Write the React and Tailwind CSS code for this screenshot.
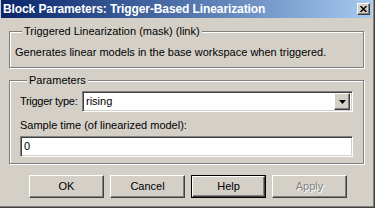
const raised =
  'border border-t-white border-l-white border-r-[#404040] border-b-[#404040] shadow-[inset_-1px_-1px_0_#808080,inset_1px_1px_0_#d4d0c8]';
const sunken =
  'border border-t-[#808080] border-l-[#808080] border-r-white border-b-white shadow-[inset_1px_1px_0_#404040,inset_-1px_-1px_0_#d4d0c8]';

function Group({ title, className, children }) {
  return (
    <fieldset
      className={`mx-[8px] border border-[#808080] shadow-[1px_1px_0_#fff,inset_1px_1px_0_#fff] ${className}`}
    >
      <legend className="ml-[7px] px-[2px] bg-[#d4d0c8] leading-[13px]">{title}</legend>
      {children}
    </fieldset>
  );
}

function Button({ label, isDefault, disabled }) {
  const inner = (
    <div
      className={`flex items-center justify-center ${raised} ${isDefault ? 'w-[73px] h-[21px]' : 'w-[75px] h-[23px]'}`}
    >
      <span className={disabled ? 'text-[#808080] [text-shadow:1px_1px_0_#fff]' : 'text-black'}>{label}</span>
    </div>
  );
  if (isDefault) {
    return <div className="border border-black">{inner}</div>;
  }
  return inner;
}

export default function App() {
  return (
    <div
      className="w-[375px] h-[208px] bg-[#d4d0c8] flex flex-col pl-[1px] pr-[2px] text-[11px] text-black border-b border-r border-[#404040] shadow-[inset_-1px_-1px_0_#808080]"
      style={{ fontFamily: '"Liberation Sans", Arial, sans-serif' }}
    >
      <div className="h-[18px] shrink-0 flex items-center justify-between bg-gradient-to-r from-[#0a246a] to-[#a6caf0] pl-[2px] pr-[2px]">
        <span className="text-white font-bold text-[12px] tracking-[-0.1px] whitespace-nowrap">
          Block Parameters: Trigger-Based Linearization
        </span>
        <div className={`w-[13px] h-[12px] bg-[#d4d0c8] flex items-center justify-center ${raised}`}>
          <svg width="7" height="6" viewBox="0 0 7 6">
            <path d="M0.5 0L6.5 6M6.5 0L0.5 6" stroke="black" strokeWidth="1.5" />
          </svg>
        </div>
      </div>

      <Group title="Triggered Linearization (mask) (link)" className="mt-[7px] h-[43px] shrink-0 pl-[5px] pt-[6px]">
        <div className="whitespace-nowrap">Generates linear models in the base workspace when triggered.</div>
      </Group>

      <Group title="Parameters" className="mt-[6px] h-[90px] shrink-0 pl-[10px] pr-[10px] pt-[4px]">
        <div className="flex items-center gap-[4px]">
          <span className="w-[58px] shrink-0 whitespace-nowrap tracking-[-0.3px]">Trigger type:</span>
          <div className={`flex-1 h-[21px] bg-white flex items-center pl-[3px] pr-[2px] ${sunken}`}>
            <span className="flex-1">rising</span>
            <div className={`w-[16px] h-[17px] bg-[#d4d0c8] flex items-center justify-center ${raised}`}>
              <svg width="7" height="4" viewBox="0 0 7 4">
                <path d="M0 0H7L3.5 4Z" fill="black" />
              </svg>
            </div>
          </div>
        </div>
        <div className="mt-[7px] leading-[13px] whitespace-nowrap">Sample time (of linearized model):</div>
        <div className={`mt-[4px] h-[21px] bg-white flex items-center pl-[3px] ${sunken}`}>0</div>
      </Group>

      <div className="mt-[11px] flex items-center pl-[28px] gap-[6px]">
        <Button label="OK" />
        <Button label="Cancel" />
        <Button label="Help" isDefault />
        <Button label="Apply" disabled />
      </div>
    </div>
  );
}
